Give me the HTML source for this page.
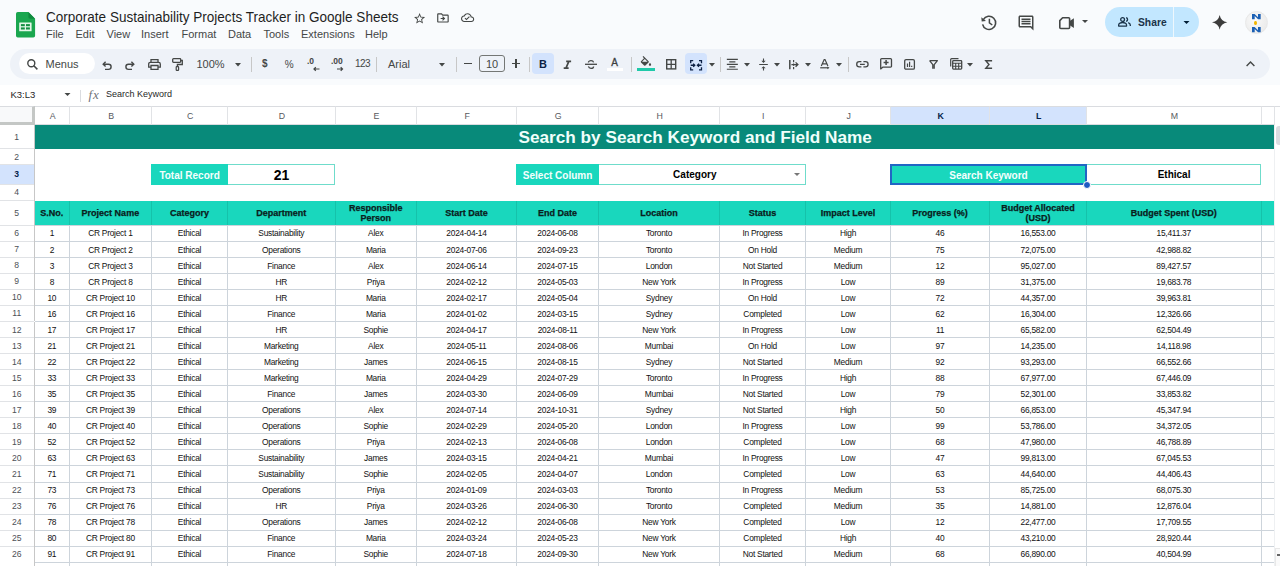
<!DOCTYPE html>
<html><head><meta charset="utf-8">
<style>
*{box-sizing:border-box}
html,body{margin:0;padding:0}
body{width:1280px;height:566px;overflow:hidden;position:relative;background:#f9fbfd;font-family:"Liberation Sans",sans-serif;color:#1f1f1f}
.abs{position:absolute}
.t{position:absolute;white-space:nowrap}
#title{left:46px;top:9px;font-size:14.2px;color:#1f1f1f;transform-origin:0 0;transform:scaleX(0.953)}
.menu{position:absolute;top:28px;font-size:11px;color:#444746}
#tb{position:absolute;left:10px;top:49px;width:1260px;height:30px;border-radius:15px;background:#eef2f8}
#search{position:absolute;left:19px;top:53px;width:76px;height:21px;border-radius:11px;background:#fff}
.tbt{position:absolute;top:58px;font-size:11px;color:#444746;white-space:nowrap}
.sep{position:absolute;top:57px;width:1px;height:15px;background:#c7c7c7}
svg{position:absolute;overflow:visible}
#fbar{position:absolute;left:0;top:85px;width:1280px;height:21px;background:#fff}
#grid{position:absolute;left:0;top:0;width:1280px;height:566px}
#gbg{position:absolute;left:0;top:106px;width:1274px;height:460px;background:#fff}
.ch{position:absolute;top:106px;height:18.5px;line-height:18.5px;text-align:center;font-size:8.8px;padding-left:1.5px;color:#575a5e;background:#fff;border-right:1px solid #e1e3e6;border-top:1px solid #dadce0;border-bottom:1px solid #dadce0}
.ch.sel{background:#d3e3fd;color:#0b57d0;font-weight:bold;color:#041e49}
.rh{position:absolute;left:0;width:34.5px;text-align:center;padding-top:0;font-size:8.6px;color:#4d5156;background:#fff;border-right:1px solid #c7c7c7}
.rhl{position:absolute;left:0;width:34px;height:1px;background:#e1e3e6}
.rh.sel{background:#d3e3fd;color:#041e49;font-weight:bold}
.hl{position:absolute;left:34.5px;width:1239.5px;height:1px;background:#cdd4db}
.vl{position:absolute;width:1px;background:#cdd4db}
.title{position:absolute;left:34.5px;width:1239.5px;background:#088a7a;color:#f0fffb;font-weight:bold;font-size:17.2px;line-height:24px;text-align:left;padding-left:484px}
.lab{position:absolute;z-index:1;background:#19d7bd;color:#f4fffd;font-weight:bold;font-size:10px;text-align:center;padding-top:1.8px}
.val{position:absolute;background:#fff;border:1px solid #6fdccb;border-left:none;color:#000;font-weight:bold;font-size:10px;text-align:center;padding-left:1.6px}
.val.big{font-size:14px}
.val.pr{padding-right:15px}
.dd{position:absolute;right:4.5px;top:8px;width:0;height:0;border-left:3px solid transparent;border-right:3px solid transparent;border-top:3px solid #777}
.selbox{position:absolute;z-index:2;border:2px solid #2166c4;box-sizing:content-box}
.handle{position:absolute;z-index:3;width:8px;height:8px;border-radius:50%;background:#1f5bc2;border:1px solid #fff;box-sizing:border-box}
.hdrbar{position:absolute;background:#19d7bd}
.hc{position:absolute;display:flex;align-items:center;justify-content:center;text-align:center;font-weight:bold;font-size:9px;line-height:10px;color:#0a201c;-webkit-text-stroke:.25px #0a201c}
.hvl{position:absolute;width:1px;background:#15c2aa}
.dc{position:absolute;text-align:center;font-size:8.4px;letter-spacing:-.25px;color:#111;white-space:nowrap;padding-top:.3px}
#vscroll{position:absolute;left:1274px;top:106px;width:6px;height:460px;background:#fff;border-left:1px solid #eef0f2}
#thumb{position:absolute;left:1275.5px;top:126px;width:4.5px;height:19px;border-radius:3px 0 0 3px;background:#dadce0}
</style></head><body>
<!-- ===== top chrome ===== -->
<svg style="left:16.1px;top:11.6px" width="19.1" height="25.5" viewBox="0 0 19.1 25.5">
  <path d="M1.8 0h10.6l6.7 6.7v17a1.8 1.8 0 0 1-1.8 1.8H1.8A1.8 1.8 0 0 1 0 23.7V1.8A1.8 1.8 0 0 1 1.8 0z" fill="#1aa64f"/>
  <path d="M12.4 0l6.7 6.7h-4.9a1.8 1.8 0 0 1-1.8-1.8z" fill="#0f8a3e"/>
  <rect x="3.2" y="10.4" width="12.4" height="8.9" rx="0.5" fill="#e3f7e8"/>
  <rect x="4.9" y="12.1" width="3.9" height="2.1" fill="#138f42"/>
  <rect x="10" y="12.1" width="3.9" height="2.1" fill="#138f42"/>
  <rect x="4.9" y="15.4" width="3.9" height="2.1" fill="#138f42"/>
  <rect x="10" y="15.4" width="3.9" height="2.1" fill="#138f42"/>
</svg>
<div class="t" id="title">Corporate Sustainability Projects Tracker in Google Sheets</div>
<!-- star -->
<svg style="left:412.6px;top:11.7px" width="13.2" height="13.2" viewBox="0 0 24 24"><path d="M22 9.24l-7.19-.62L12 2 9.19 8.63 2 9.24l5.46 4.73L5.82 21 12 17.27 18.18 21l-1.63-7.03L22 9.24zM12 15.4l-3.76 2.27 1-4.28-3.32-2.88 4.38-.38L12 6.1l1.71 4.04 4.38.38-3.32 2.88 1 4.28L12 15.4z" fill="#444746"/></svg>
<!-- folder move -->
<svg style="left:436px;top:10.5px" width="13.9" height="13.9" viewBox="0 0 24 24"><path d="M20 6h-8l-2-2H4c-1.1 0-1.99.9-1.99 2L2 18c0 1.1.9 2 2 2h16c1.1 0 2-.9 2-2V8c0-1.1-.9-2-2-2zm0 12H4V6h5.17l2 2H20v10zm-7.84-6H8v2h4.16l-1.59 1.59L11.99 17 16 13.01 11.99 9l-1.41 1.41L12.16 12z" fill="#444746"/></svg>
<!-- cloud done -->
<svg style="left:461px;top:10.9px" width="13.2" height="13.2" viewBox="0 0 24 24"><path d="M19.35 10.04C18.67 6.59 15.640 4 12 4 9.11 4 6.6 5.64 5.35 8.04 2.34 8.36 0 10.91 0 14c0 3.31 2.69 6 6 6h13c2.76 0 5-2.24 5-5 0-2.64-2.05-4.78-4.65-4.96zM19 18H6c-2.21 0-4-1.79-4-4 0-2.05 1.53-3.76 3.56-3.97l1.07-.11.5-.95C8.08 7.14 9.940 6 12 6c2.62 0 4.88 1.86 5.39 4.43l.3 1.5 1.53.11c1.56.1 2.78 1.41 2.78 2.96 0 1.65-1.35 3-3 3zm-9-3.82l-2.09-2.09L6.5 13.5 10 17l6.01-6.01-1.41-1.41z" fill="#444746"/></svg>

<div class="menu" style="left:46px">File</div>
<div class="menu" style="left:75.5px">Edit</div>
<div class="menu" style="left:106.5px">View</div>
<div class="menu" style="left:141px">Insert</div>
<div class="menu" style="left:181.5px">Format</div>
<div class="menu" style="left:228px">Data</div>
<div class="menu" style="left:263.5px">Tools</div>
<div class="menu" style="left:301px">Extensions</div>
<div class="menu" style="left:365px">Help</div>

<!-- right side of header -->
<!-- history -->
<svg style="left:981px;top:15px" width="15.5" height="15" viewBox="0 0 15.5 15"><path d="M2.3 4.6A6.6 6.6 0 1 1 1.6 9.3" fill="none" stroke="#444746" stroke-width="1.6"/><path d="M.3 2.2l.4 4.4 4.3-.7z" fill="#444746"/><path d="M8.4 3.8v4.1l2.9 2.1" fill="none" stroke="#444746" stroke-width="1.5"/></svg>
<!-- comment -->
<svg style="left:1017px;top:14px" width="18" height="18" viewBox="0 0 24 24"><path d="M21.99 4c0-1.1-.89-2-1.99-2H4c-1.1 0-2 .9-2 2v12c0 1.1.9 2 2 2h14l4 4zM20 4v13.17L18.83 16H4V4zM6 12h12v2H6zm0-3h12v2H6zm0-3h12v2H6z" fill="#444746"/></svg>
<!-- video -->
<svg style="left:1058.9px;top:16.7px" width="15.3" height="12.3" viewBox="0 0 15.3 12.3"><path d="M3.6.8h6a1 1 0 0 1 1 1v8.7a1 1 0 0 1-1 1H1.8a1 1 0 0 1-1-1V3.6z" fill="none" stroke="#444746" stroke-width="1.6" stroke-linejoin="round"/><path d="M10.4 4.3l4.5-3v9.7l-4.5-3z" fill="#444746"/></svg>
<svg style="left:1082px;top:20px" width="6" height="4" viewBox="0 0 6 4"><path d="M0 0h6L3 3z" fill="#444746"/></svg>
<!-- share -->
<div class="abs" style="left:1105px;top:7.2px;width:93.5px;height:29.6px;border-radius:15px;background:#c2e7ff"></div>
<div class="abs" style="left:1172.5px;top:7.2px;width:1px;height:29.6px;background:#f9fbfd;opacity:.8"></div>
<svg style="left:1118px;top:17.2px" width="13" height="9.8" viewBox="0 0 13 9.8"><circle cx="4.6" cy="2.5" r="1.9" fill="none" stroke="#1b3349" stroke-width="1.3"/><path d="M.65 9.1V7.9c0-1.5 2.3-2.4 3.95-2.4s3.95.9 3.95 2.4v1.2z" fill="none" stroke="#1b3349" stroke-width="1.3" stroke-linejoin="round"/><path d="M8.1.7a1.9 1.9 0 0 1 0 3.7" fill="none" stroke="#1b3349" stroke-width="1.3"/><path d="M10.2 5.7c1.2.4 2.1 1.1 2.1 2.2v1.2" fill="none" stroke="#1b3349" stroke-width="1.3"/></svg>
<div class="t" style="left:1137.5px;top:15.5px;font-size:11.2px;font-weight:bold;color:#1b3349;transform-origin:0 0;transform:scaleX(.92)">Share</div>
<svg style="left:1183px;top:21px" width="7" height="4" viewBox="0 0 6 4"><path d="M0 0h6L3 3z" fill="#001d35"/></svg>
<!-- gemini -->
<svg style="left:1212px;top:15px" width="15.3" height="14.7" viewBox="0 0 24 24" preserveAspectRatio="none"><path d="M12 0A15 15 0 0 0 24 12 15 15 0 0 0 12 24 15 15 0 0 0 0 12 15 15 0 0 0 12 0z" fill="#3c3c3c"/></svg>
<!-- avatar -->
<div class="abs" style="left:1244.9px;top:11.2px;width:23.2px;height:23.2px;border-radius:50%;background:radial-gradient(circle at 40% 40%,#fafafa,#e6e6e6);border:1px solid #e8e8e8"></div>
<svg style="left:1251.6px;top:13.5px" width="8.7" height="5.2" viewBox="0 0 8.7 5.2"><path d="M0 0h2.6l3.4 3.2V0h2.7v5.2H6.1L2.7 2v3.2H0z" fill="#1a5fb4"/></svg>
<div class="abs" style="left:1254.3px;top:20.8px;width:2.6px;height:4px;border-radius:50%;background:#f2b600"></div>
<svg style="left:1251.6px;top:27.2px" width="8.7" height="5.3" viewBox="0 0 8.7 5.2"><path d="M0 0h2.6l3.4 3.2V0h2.7v5.2H6.1L2.7 2v3.2H0z" fill="#1a5fb4"/></svg>

<!-- toolbar -->
<div id="tb"></div>
<div id="search"></div>
<svg style="left:26.5px;top:58.8px" width="11" height="11" viewBox="0 0 11 11"><circle cx="4.3" cy="4.3" r="3.5" fill="none" stroke="#444746" stroke-width="1.4"/><path d="M6.8 6.8L10.4 10.4" stroke="#444746" stroke-width="1.5"/></svg>
<div class="tbt" style="left:45.5px;top:57.5px">Menus</div>
<svg style="left:102px;top:60.5px" width="10" height="9" viewBox="0 0 10 9"><path d="M1.5 3.2h5a2.6 2.6 0 0 1 0 5.2H3" fill="none" stroke="#444746" stroke-width="1.4"/><path d="M3.6 .8L1.2 3.2 3.6 5.6" fill="none" stroke="#444746" stroke-width="1.4"/></svg>
<svg style="left:125.3px;top:60.7px" width="10" height="9" viewBox="0 0 10 9"><path d="M8.5 3.2h-5a2.6 2.6 0 0 0 0 5.2H7" fill="none" stroke="#444746" stroke-width="1.4"/><path d="M6.4 .8l2.4 2.4-2.4 2.4" fill="none" stroke="#444746" stroke-width="1.4"/></svg>
<svg style="left:148px;top:59px" width="13" height="11" viewBox="0 0 13 11"><path d="M3 3.3V.7h7v2.6" fill="none" stroke="#444746" stroke-width="1.3"/><path d="M3 8.2H.7V5a1.7 1.7 0 0 1 1.7-1.7h8.2A1.7 1.7 0 0 1 12.3 5v3.2H10" fill="none" stroke="#444746" stroke-width="1.3"/><path d="M3 6.5h7v3.8H3z" fill="none" stroke="#444746" stroke-width="1.3"/></svg>
<svg style="left:171.8px;top:57.8px" width="11" height="13" viewBox="0 0 11 13"><rect x=".7" y=".7" width="8" height="3.6" rx=".8" fill="none" stroke="#444746" stroke-width="1.3"/><path d="M8.7 2.5h1.6v4H5.4v2.3" fill="none" stroke="#444746" stroke-width="1.3"/><rect x="4.2" y="8.6" width="2.4" height="3.8" rx=".6" fill="none" stroke="#444746" stroke-width="1.2"/></svg>
<div class="tbt" style="left:196.5px">100%</div>
<svg style="left:234.8px;top:62.5px" width="6" height="3.5" viewBox="0 0 6 3.5"><path d="M0 0h6L3 3.5z" fill="#444746"/></svg>
<div class="sep" style="left:250.5px"></div>
<div class="tbt" style="left:262px;font-weight:bold;font-size:10px;top:58px">$</div>
<div class="tbt" style="left:284.8px;font-size:10px;top:58.5px">%</div>
<div class="tbt" style="left:307px;font-size:8.5px;top:56.3px;font-weight:bold;letter-spacing:-.2px">.0</div>
<svg style="left:313px;top:66.5px" width="6.5" height="4" viewBox="0 0 6.5 4"><path d="M6.5 2H1.2M2.8 .3L1 2l1.8 1.7" fill="none" stroke="#444746" stroke-width="1.2"/></svg>
<div class="tbt" style="left:331px;font-size:8.5px;top:56.3px;font-weight:bold;letter-spacing:0px">.00</div>
<svg style="left:336.5px;top:66.7px" width="6.5" height="4" viewBox="0 0 6.5 4"><path d="M0 2h5.3M3.7 .3L5.5 2 3.7 3.7" fill="none" stroke="#444746" stroke-width="1.2"/></svg>
<div class="tbt" style="left:355px;font-size:10px;top:58px;letter-spacing:-.6px">123</div>
<div class="sep" style="left:376px"></div>
<div class="tbt" style="left:388px;top:57.5px">Arial</div>
<svg style="left:439px;top:62.5px" width="6" height="3.5" viewBox="0 0 6 3.5"><path d="M0 0h6L3 3.5z" fill="#444746"/></svg>
<div class="sep" style="left:455.5px"></div>
<div class="abs" style="left:464px;top:63.2px;width:8px;height:1.3px;background:#444746"></div>
<div class="abs" style="left:479.3px;top:54.9px;width:25.4px;height:17.5px;border:1px solid #747775;border-radius:3px"></div>
<div class="tbt" style="left:486px;top:58px">10</div>
<div class="abs" style="left:511.8px;top:63.2px;width:8.4px;height:1.3px;background:#444746"></div>
<div class="abs" style="left:515.35px;top:59.2px;width:1.3px;height:9.3px;background:#444746"></div>
<div class="sep" style="left:528.5px"></div>
<div class="abs" style="left:532px;top:53.3px;width:21.7px;height:20.6px;border-radius:4px;background:#d3e3fd"></div>
<div class="tbt" style="left:539px;top:57.8px;font-weight:bold;font-size:11px;color:#0b1f44">B</div>
<svg style="left:559.8px;top:57.5px" width="14.8" height="14.8" viewBox="0 0 24 24"><path d="M10 4v3h2.21l-3.42 8H6v3h8v-3h-2.21l3.42-8H18V4z" fill="#444746"/></svg>
<svg style="left:585px;top:60px" width="12" height="9" viewBox="0 0 12 9"><path d="M0 4.3h12" stroke="#444746" stroke-width="1.3"/><path d="M8.6 2.3C8.3 1.2 7.2.7 6 .7 4.6.7 3.4 1.4 3.4 2.5M3.4 6.4C3.7 7.6 4.8 8.3 6 8.3c1.4 0 2.6-.6 2.6-1.9" fill="none" stroke="#444746" stroke-width="1.3"/></svg>
<div class="tbt" style="left:611.3px;top:57px;font-size:10px;color:#3c3f41;-webkit-text-stroke:.3px #3c3f41">A</div>
<div class="abs" style="left:607px;top:68px;width:16.4px;height:2.8px;background:#fff"></div>
<div class="sep" style="left:631px"></div>
<svg style="left:638.9px;top:55.8px" width="13.9" height="13.9" viewBox="0 0 24 24"><path d="M16.56 8.94L7.62 0 6.21 1.41l2.38 2.38-5.15 5.15c-.59.59-.59 1.54 0 2.12l5.5 5.5c.29.29.68.44 1.06.44s.77-.15 1.06-.44l5.5-5.5c.59-.58.59-1.53 0-2.12zM5.21 10L10 5.21 14.79 10H5.21zM19 11.5s-2 2.17-2 3.5c0 1.1.9 2 2 2s2-.9 2-2c0-1.33-2-3.5-2-3.5z" fill="#444746"/></svg>
<div class="abs" style="left:637.2px;top:67.9px;width:17.8px;height:2.7px;background:#1fc9a9"></div>
<svg style="left:665.7px;top:59.3px" width="10.4" height="10.6" viewBox="0 0 10.4 10.6"><rect x=".7" y=".7" width="9" height="9.2" fill="none" stroke="#444746" stroke-width="1.4"/><path d="M5.2 .7v9.2M.7 5.3h9" stroke="#444746" stroke-width="1.3"/></svg>
<div class="abs" style="left:685.3px;top:53.1px;width:21.3px;height:21.3px;border-radius:4px;background:#d3e3fd"></div>
<svg style="left:690px;top:59.5px" width="12.2" height="10.5" viewBox="0 0 12.2 10.5"><path d="M3.2 .7H.7v2.6M.7 7.2v2.6h2.5M9 .7h2.5v2.6M11.5 7.2v2.6H9" fill="none" stroke="#0b1f44" stroke-width="1.3"/><path d="M.7 5.25h4M3.2 3.6l1.6 1.65-1.6 1.65M11.5 5.25h-4M9 3.6L7.4 5.25 9 6.9" fill="none" stroke="#0b1f44" stroke-width="1.3"/></svg>
<svg style="left:709px;top:63px" width="6" height="3.5" viewBox="0 0 6 3.5"><path d="M0 0h6L3 3.5z" fill="#444746"/></svg>
<div class="sep" style="left:720px"></div>
<svg style="left:725.3px;top:57.1px" width="14.7" height="14.7" viewBox="0 0 24 24"><path d="M7 15v2h10v-2H7zm-4 6h18v-2H3v2zm0-8h18v-2H3v2zm4-6v2h10V7H7zM3 3v2h18V3H3z" fill="#444746"/></svg>
<svg style="left:743.9px;top:62.7px" width="6" height="3.5" viewBox="0 0 6 3.5"><path d="M0 0h6L3 3.5z" fill="#444746"/></svg>
<svg style="left:756.9px;top:58.05px" width="13" height="13" viewBox="0 0 24 24"><path d="M8 19h3v4h2v-4h3l-4-4-4 4zm8-14h-3V1h-2v4H8l4 4 4-4zM4 11v2h16v-2H4z" fill="#444746"/></svg>
<svg style="left:773.8px;top:62.7px" width="6" height="3.5" viewBox="0 0 6 3.5"><path d="M0 0h6L3 3.5z" fill="#444746"/></svg>
<svg style="left:789px;top:60px" width="9.6" height="9.2" viewBox="0 0 9.6 9.2"><path d="M.8 0v9.2" stroke="#444746" stroke-width="1.5"/><path d="M4.6 0v2.2M4.6 3.5v2.2M4.6 7v2.2" stroke="#444746" stroke-width="1.2"/><path d="M2.4 4.6h6.4M6.6 2.4l2.3 2.2-2.3 2.2" fill="none" stroke="#444746" stroke-width="1.3"/></svg>
<svg style="left:804.8px;top:62.7px" width="6" height="3.5" viewBox="0 0 6 3.5"><path d="M0 0h6L3 3.5z" fill="#444746"/></svg>
<svg style="left:820px;top:59.3px" width="10" height="10.2" viewBox="0 0 10 10.2"><path d="M1.3 7L4.2 .6h.8L7.9 7M2.5 4.8h4.2" fill="none" stroke="#444746" stroke-width="1.2"/><path d="M.2 8.8h8" stroke="#444746" stroke-width="1.2"/><path d="M7.4 7.4l2.1 1.4-2.1 1.4z" fill="#444746"/></svg>
<svg style="left:835.8px;top:62.7px" width="6" height="3.5" viewBox="0 0 6 3.5"><path d="M0 0h6L3 3.5z" fill="#444746"/></svg>
<div class="sep" style="left:847.5px"></div>
<svg style="left:855.6px;top:61.2px" width="12.8" height="6.6" viewBox="0 0 12.8 6.6"><path d="M5.4.7H3.3a2.6 2.6 0 0 0 0 5.2h2.1M7.4.7h2.1a2.6 2.6 0 0 1 0 5.2H7.4M4 3.3h4.8" fill="none" stroke="#444746" stroke-width="1.3"/></svg>
<svg style="left:879.9px;top:58.2px" width="12.2" height="11.6" viewBox="0 0 12.2 11.6"><path d="M1.6.7h9a.9.9 0 0 1 .9.9v6.6a.9.9 0 0 1-.9.9H3L.7 10.9V1.6a.9.9 0 0 1 .9-.9z" fill="none" stroke="#444746" stroke-width="1.3" stroke-linejoin="round"/><path d="M6.1 2.1v5M3.6 4.6h5" stroke="#444746" stroke-width="1.5"/></svg>
<svg style="left:903.9px;top:58.8px" width="11.1" height="10.9" viewBox="0 0 11.1 10.9"><rect x=".7" y=".7" width="9.7" height="9.5" rx="1.3" fill="none" stroke="#444746" stroke-width="1.3"/><path d="M3.5 8V4.5M5.6 8V2.8M7.7 8V6.8" stroke="#444746" stroke-width="1.2"/></svg>
<svg style="left:929px;top:60px" width="9" height="8.8" viewBox="0 0 9 8.8"><path d="M.6.7h7.8L5.2 4.6v4.2M3.8 8.8V4.6L.6.7" fill="none" stroke="#444746" stroke-width="1.3" stroke-linejoin="round"/></svg>
<svg style="left:949.6px;top:58.2px" width="12.4" height="11.8" viewBox="0 0 12.4 11.8"><path d="M.7 8.5V1.5a.8.8 0 0 1 .8-.8h7" fill="none" stroke="#444746" stroke-width="1.2"/><rect x="2.7" y="2.7" width="9" height="8.4" rx=".8" fill="none" stroke="#444746" stroke-width="1.3"/><path d="M2.7 5.3h9M2.7 8.2h9M5.7 5.3v5.8M8.7 5.3v5.8" stroke="#444746" stroke-width="1.1"/></svg>
<svg style="left:967.2px;top:62.5px" width="6" height="3.5" viewBox="0 0 6 3.5"><path d="M0 0h6L3 3.5z" fill="#444746"/></svg>
<svg style="left:984.8px;top:60px" width="7.3" height="9" viewBox="0 0 7.3 9"><path d="M7.1.7H.8l3.2 3.8L.8 8.3h6.3" fill="none" stroke="#444746" stroke-width="1.4"/></svg>
<svg style="left:1245.7px;top:60.5px" width="9" height="5.5" viewBox="0 0 9 5.5"><path d="M.6 4.9L4.5 1 8.4 4.9" fill="none" stroke="#444746" stroke-width="1.4"/></svg>

<!-- formula bar -->
<div id="fbar"></div>
<div class="t" style="left:10.5px;top:89px;font-size:9.5px;color:#1f1f1f">K3:L3</div>
<svg style="left:64px;top:93px" width="7" height="4" viewBox="0 0 6 4"><path d="M0 0h6L3 3z" fill="#444746"/></svg>
<div class="abs" style="left:79.5px;top:90px;width:1px;height:12px;background:#dadce0"></div>
<div class="t" style="left:88.5px;top:86.5px;font-size:13px;font-style:italic;font-family:'Liberation Serif',serif;color:#6f7378;letter-spacing:1px">fx</div>
<div class="t" style="left:106px;top:89px;font-size:9px;color:#1f1f1f">Search Keyword</div>
<div id="gbg"></div>
<div id="vscroll"></div>
<div id="thumb"></div>
<div class="abs" style="left:1275px;top:548px;width:5px;height:18px;background:#fafafa;border-left:1px solid #e8e8e8;border-top:1px solid #e8e8e8"></div>
<div class="abs" style="left:1277px;top:554px;width:3px;height:1.5px;background:#666"></div>
<div class="abs" style="left:0;top:106px;width:1280px;height:1px;background:#dadce0"></div>
<div class="abs" style="left:0;top:106px;width:34.5px;height:18.5px;background:#f8f9fa;border-top:1px solid #dadce0;border-bottom:3px solid #c4c7c5;border-right:3px solid #c4c7c5"></div>

<div id="grid">
<div class="ch" style="left:35.0px;width:34.75px">A</div>
<div class="ch" style="left:69.75px;width:82.25px">B</div>
<div class="ch" style="left:152.0px;width:76.0px">C</div>
<div class="ch" style="left:228.0px;width:107.5px">D</div>
<div class="ch" style="left:335.5px;width:81.5px">E</div>
<div class="ch" style="left:417.0px;width:100.0px">F</div>
<div class="ch" style="left:517.0px;width:82.0px">G</div>
<div class="ch" style="left:599.0px;width:121.0px">H</div>
<div class="ch" style="left:720.0px;width:86.0px">I</div>
<div class="ch" style="left:806.0px;width:85.0px">J</div>
<div class="ch sel" style="left:891.0px;width:99.0px">K</div>
<div class="ch sel" style="left:990.0px;width:97.0px">L</div>
<div class="ch" style="left:1087.0px;width:174.5px">M</div>
<div class="ch" style="left:1261.5px;width:13px"></div>
<div class="rh" style="top:124.5px;height:24.0px;line-height:24.0px">1</div>
<div class="rh" style="top:148.5px;height:16.099999999999994px;line-height:16.099999999999994px">2</div>
<div class="rh sel" style="top:164.6px;height:19.700000000000017px;line-height:19.700000000000017px">3</div>
<div class="rh" style="top:184.3px;height:16.299999999999983px;line-height:16.299999999999983px">4</div>
<div class="rh" style="top:200.6px;height:24.599999999999994px;line-height:24.599999999999994px">5</div>
<div class="rh" style="top:225.2px;height:16.05000000000001px;line-height:16.05000000000001px">6</div>
<div class="rh" style="top:241.25px;height:16.05000000000001px;line-height:16.05000000000001px">7</div>
<div class="rh" style="top:257.3px;height:16.05000000000001px;line-height:16.05000000000001px">8</div>
<div class="rh" style="top:273.35px;height:16.049999999999955px;line-height:16.049999999999955px">9</div>
<div class="rh" style="top:289.4px;height:16.05000000000001px;line-height:16.05000000000001px">10</div>
<div class="rh" style="top:305.45px;height:16.05000000000001px;line-height:16.05000000000001px">11</div>
<div class="rh" style="top:321.5px;height:16.05000000000001px;line-height:16.05000000000001px">12</div>
<div class="rh" style="top:337.55px;height:16.05000000000001px;line-height:16.05000000000001px">13</div>
<div class="rh" style="top:353.6px;height:16.049999999999955px;line-height:16.049999999999955px">14</div>
<div class="rh" style="top:369.65px;height:16.05000000000001px;line-height:16.05000000000001px">15</div>
<div class="rh" style="top:385.7px;height:16.05000000000001px;line-height:16.05000000000001px">16</div>
<div class="rh" style="top:401.75px;height:16.05000000000001px;line-height:16.05000000000001px">17</div>
<div class="rh" style="top:417.8px;height:16.05000000000001px;line-height:16.05000000000001px">18</div>
<div class="rh" style="top:433.85px;height:16.049999999999955px;line-height:16.049999999999955px">19</div>
<div class="rh" style="top:449.9px;height:16.05000000000001px;line-height:16.05000000000001px">20</div>
<div class="rh" style="top:465.95px;height:16.05000000000001px;line-height:16.05000000000001px">21</div>
<div class="rh" style="top:482.0px;height:16.05000000000001px;line-height:16.05000000000001px">22</div>
<div class="rh" style="top:498.05px;height:16.05000000000001px;line-height:16.05000000000001px">23</div>
<div class="rh" style="top:514.1px;height:16.049999999999955px;line-height:16.049999999999955px">24</div>
<div class="rh" style="top:530.15px;height:16.050000000000068px;line-height:16.050000000000068px">25</div>
<div class="rh" style="top:546.2px;height:16.049999999999955px;line-height:16.049999999999955px">26</div>
<div class="rhl" style="top:148px"></div>
<div class="rhl" style="top:164px"></div>
<div class="rhl" style="top:184px"></div>
<div class="rhl" style="top:200px"></div>
<div class="rhl" style="top:225px"></div>
<div class="rhl" style="top:241px"></div>
<div class="rhl" style="top:257px"></div>
<div class="rhl" style="top:273px"></div>
<div class="rhl" style="top:289px"></div>
<div class="rhl" style="top:305px"></div>
<div class="rhl" style="top:321px"></div>
<div class="rhl" style="top:337px"></div>
<div class="rhl" style="top:353px"></div>
<div class="rhl" style="top:369px"></div>
<div class="rhl" style="top:385px"></div>
<div class="rhl" style="top:401px"></div>
<div class="rhl" style="top:417px"></div>
<div class="rhl" style="top:433px"></div>
<div class="rhl" style="top:449px"></div>
<div class="rhl" style="top:465px"></div>
<div class="rhl" style="top:482px"></div>
<div class="rhl" style="top:498px"></div>
<div class="rhl" style="top:514px"></div>
<div class="rhl" style="top:530px"></div>
<div class="rhl" style="top:546px"></div>
<div class="rhl" style="top:562px"></div>
<div class="rh" style="top:562.25px;height:20px"></div>
<div class="hl" style="top:225px"></div>
<div class="hl" style="top:241px"></div>
<div class="hl" style="top:257px"></div>
<div class="hl" style="top:273px"></div>
<div class="hl" style="top:289px"></div>
<div class="hl" style="top:305px"></div>
<div class="hl" style="top:321px"></div>
<div class="hl" style="top:337px"></div>
<div class="hl" style="top:353px"></div>
<div class="hl" style="top:369px"></div>
<div class="hl" style="top:385px"></div>
<div class="hl" style="top:401px"></div>
<div class="hl" style="top:417px"></div>
<div class="hl" style="top:433px"></div>
<div class="hl" style="top:449px"></div>
<div class="hl" style="top:465px"></div>
<div class="hl" style="top:482px"></div>
<div class="hl" style="top:498px"></div>
<div class="hl" style="top:514px"></div>
<div class="hl" style="top:530px"></div>
<div class="hl" style="top:546px"></div>
<div class="hl" style="top:562px"></div>
<div class="vl" style="left:68.75px;top:200.6px;height:365.4px"></div>
<div class="vl" style="left:151.0px;top:200.6px;height:365.4px"></div>
<div class="vl" style="left:227.0px;top:200.6px;height:365.4px"></div>
<div class="vl" style="left:334.5px;top:200.6px;height:365.4px"></div>
<div class="vl" style="left:416.0px;top:200.6px;height:365.4px"></div>
<div class="vl" style="left:516.0px;top:200.6px;height:365.4px"></div>
<div class="vl" style="left:598.0px;top:200.6px;height:365.4px"></div>
<div class="vl" style="left:719.0px;top:200.6px;height:365.4px"></div>
<div class="vl" style="left:805.0px;top:200.6px;height:365.4px"></div>
<div class="vl" style="left:890.0px;top:200.6px;height:365.4px"></div>
<div class="vl" style="left:989.0px;top:200.6px;height:365.4px"></div>
<div class="vl" style="left:1086.0px;top:200.6px;height:365.4px"></div>
<div class="vl" style="left:1260.5px;top:200.6px;height:365.4px"></div>
<div class="title" style="top:124.5px;height:24.0px">Search by Search Keyword and Field Name</div>
<div class="lab" style="left:150.9px;top:164.2px;width:77.4px;height:20.6px;line-height:20.6px">Total Record</div>
<div class="val big" style="left:227.5px;top:164.2px;width:107.5px;height:20.6px;line-height:20.6px">21</div>
<div class="lab" style="left:515.9px;top:164.2px;width:83.39999999999998px;height:20.6px;line-height:20.6px">Select Column</div>
<div class="val pr" style="left:598.5px;top:164.2px;width:207.0px;height:20.6px;line-height:20.6px">Category<span class="dd"></span></div>
<div class="lab" style="left:890.5px;top:164.2px;width:196.0px;height:20.6px;line-height:20.6px">Search Keyword</div>
<div class="val" style="left:1086.5px;top:164.2px;width:174.5px;height:20.6px;line-height:20.6px">Ethical</div>
<div class="selbox" style="left:890.0px;top:164px;width:193.0px;height:17px"></div>
<div class="handle" style="left:1082.5px;top:180.6px"></div>
<div class="hdrbar" style="top:200.6px;height:24.599999999999994px;left:34.5px;width:1239.5px"></div>
<div class="hc" style="left:34.5px;top:200.6px;width:34.75px;height:24.599999999999994px"><span>S.No.</span></div>
<div class="hc" style="left:69.25px;top:200.6px;width:82.25px;height:24.599999999999994px"><span>Project Name</span></div>
<div class="hc" style="left:151.5px;top:200.6px;width:76.0px;height:24.599999999999994px"><span>Category</span></div>
<div class="hc" style="left:227.5px;top:200.6px;width:107.5px;height:24.599999999999994px"><span>Department</span></div>
<div class="hc" style="left:335px;top:200.6px;width:81.5px;height:24.599999999999994px"><span>Responsible<br>Person</span></div>
<div class="hc" style="left:416.5px;top:200.6px;width:100.0px;height:24.599999999999994px"><span>Start Date</span></div>
<div class="hc" style="left:516.5px;top:200.6px;width:82.0px;height:24.599999999999994px"><span>End Date</span></div>
<div class="hc" style="left:598.5px;top:200.6px;width:121.0px;height:24.599999999999994px"><span>Location</span></div>
<div class="hc" style="left:719.5px;top:200.6px;width:86.0px;height:24.599999999999994px"><span>Status</span></div>
<div class="hc" style="left:805.5px;top:200.6px;width:85.0px;height:24.599999999999994px"><span>Impact Level</span></div>
<div class="hc" style="left:890.5px;top:200.6px;width:99.0px;height:24.599999999999994px"><span>Progress (%)</span></div>
<div class="hc" style="left:989.5px;top:200.6px;width:97.0px;height:24.599999999999994px"><span>Budget Allocated<br>(USD)</span></div>
<div class="hc" style="left:1086.5px;top:200.6px;width:174.5px;height:24.599999999999994px"><span>Budget Spent (USD)</span></div>
<div class="hvl" style="left:68.75px;top:200.6px;height:24.599999999999994px"></div>
<div class="hvl" style="left:151.0px;top:200.6px;height:24.599999999999994px"></div>
<div class="hvl" style="left:227.0px;top:200.6px;height:24.599999999999994px"></div>
<div class="hvl" style="left:334.5px;top:200.6px;height:24.599999999999994px"></div>
<div class="hvl" style="left:416.0px;top:200.6px;height:24.599999999999994px"></div>
<div class="hvl" style="left:516.0px;top:200.6px;height:24.599999999999994px"></div>
<div class="hvl" style="left:598.0px;top:200.6px;height:24.599999999999994px"></div>
<div class="hvl" style="left:719.0px;top:200.6px;height:24.599999999999994px"></div>
<div class="hvl" style="left:805.0px;top:200.6px;height:24.599999999999994px"></div>
<div class="hvl" style="left:890.0px;top:200.6px;height:24.599999999999994px"></div>
<div class="hvl" style="left:989.0px;top:200.6px;height:24.599999999999994px"></div>
<div class="hvl" style="left:1086.0px;top:200.6px;height:24.599999999999994px"></div>
<div class="hvl" style="left:1260.5px;top:200.6px;height:24.599999999999994px"></div>
<div class="dc" style="left:34.5px;top:225.2px;width:34.75px;height:16.05000000000001px;line-height:16.05000000000001px">1</div>
<div class="dc" style="left:69.25px;top:225.2px;width:82.25px;height:16.05000000000001px;line-height:16.05000000000001px">CR Project 1</div>
<div class="dc" style="left:151.5px;top:225.2px;width:76.0px;height:16.05000000000001px;line-height:16.05000000000001px">Ethical</div>
<div class="dc" style="left:227.5px;top:225.2px;width:107.5px;height:16.05000000000001px;line-height:16.05000000000001px">Sustainability</div>
<div class="dc" style="left:335px;top:225.2px;width:81.5px;height:16.05000000000001px;line-height:16.05000000000001px">Alex</div>
<div class="dc" style="left:416.5px;top:225.2px;width:100.0px;height:16.05000000000001px;line-height:16.05000000000001px">2024-04-14</div>
<div class="dc" style="left:516.5px;top:225.2px;width:82.0px;height:16.05000000000001px;line-height:16.05000000000001px">2024-06-08</div>
<div class="dc" style="left:598.5px;top:225.2px;width:121.0px;height:16.05000000000001px;line-height:16.05000000000001px">Toronto</div>
<div class="dc" style="left:719.5px;top:225.2px;width:86.0px;height:16.05000000000001px;line-height:16.05000000000001px">In Progress</div>
<div class="dc" style="left:805.5px;top:225.2px;width:85.0px;height:16.05000000000001px;line-height:16.05000000000001px">High</div>
<div class="dc" style="left:890.5px;top:225.2px;width:99.0px;height:16.05000000000001px;line-height:16.05000000000001px">46</div>
<div class="dc" style="left:989.5px;top:225.2px;width:97.0px;height:16.05000000000001px;line-height:16.05000000000001px">16,553.00</div>
<div class="dc" style="left:1086.5px;top:225.2px;width:174.5px;height:16.05000000000001px;line-height:16.05000000000001px">15,411.37</div>
<div class="dc" style="left:34.5px;top:241.25px;width:34.75px;height:16.05000000000001px;line-height:16.05000000000001px">2</div>
<div class="dc" style="left:69.25px;top:241.25px;width:82.25px;height:16.05000000000001px;line-height:16.05000000000001px">CR Project 2</div>
<div class="dc" style="left:151.5px;top:241.25px;width:76.0px;height:16.05000000000001px;line-height:16.05000000000001px">Ethical</div>
<div class="dc" style="left:227.5px;top:241.25px;width:107.5px;height:16.05000000000001px;line-height:16.05000000000001px">Operations</div>
<div class="dc" style="left:335px;top:241.25px;width:81.5px;height:16.05000000000001px;line-height:16.05000000000001px">Maria</div>
<div class="dc" style="left:416.5px;top:241.25px;width:100.0px;height:16.05000000000001px;line-height:16.05000000000001px">2024-07-06</div>
<div class="dc" style="left:516.5px;top:241.25px;width:82.0px;height:16.05000000000001px;line-height:16.05000000000001px">2024-09-23</div>
<div class="dc" style="left:598.5px;top:241.25px;width:121.0px;height:16.05000000000001px;line-height:16.05000000000001px">Toronto</div>
<div class="dc" style="left:719.5px;top:241.25px;width:86.0px;height:16.05000000000001px;line-height:16.05000000000001px">On Hold</div>
<div class="dc" style="left:805.5px;top:241.25px;width:85.0px;height:16.05000000000001px;line-height:16.05000000000001px">Medium</div>
<div class="dc" style="left:890.5px;top:241.25px;width:99.0px;height:16.05000000000001px;line-height:16.05000000000001px">75</div>
<div class="dc" style="left:989.5px;top:241.25px;width:97.0px;height:16.05000000000001px;line-height:16.05000000000001px">72,075.00</div>
<div class="dc" style="left:1086.5px;top:241.25px;width:174.5px;height:16.05000000000001px;line-height:16.05000000000001px">42,988.82</div>
<div class="dc" style="left:34.5px;top:257.3px;width:34.75px;height:16.05000000000001px;line-height:16.05000000000001px">3</div>
<div class="dc" style="left:69.25px;top:257.3px;width:82.25px;height:16.05000000000001px;line-height:16.05000000000001px">CR Project 3</div>
<div class="dc" style="left:151.5px;top:257.3px;width:76.0px;height:16.05000000000001px;line-height:16.05000000000001px">Ethical</div>
<div class="dc" style="left:227.5px;top:257.3px;width:107.5px;height:16.05000000000001px;line-height:16.05000000000001px">Finance</div>
<div class="dc" style="left:335px;top:257.3px;width:81.5px;height:16.05000000000001px;line-height:16.05000000000001px">Alex</div>
<div class="dc" style="left:416.5px;top:257.3px;width:100.0px;height:16.05000000000001px;line-height:16.05000000000001px">2024-06-14</div>
<div class="dc" style="left:516.5px;top:257.3px;width:82.0px;height:16.05000000000001px;line-height:16.05000000000001px">2024-07-15</div>
<div class="dc" style="left:598.5px;top:257.3px;width:121.0px;height:16.05000000000001px;line-height:16.05000000000001px">London</div>
<div class="dc" style="left:719.5px;top:257.3px;width:86.0px;height:16.05000000000001px;line-height:16.05000000000001px">Not Started</div>
<div class="dc" style="left:805.5px;top:257.3px;width:85.0px;height:16.05000000000001px;line-height:16.05000000000001px">Medium</div>
<div class="dc" style="left:890.5px;top:257.3px;width:99.0px;height:16.05000000000001px;line-height:16.05000000000001px">12</div>
<div class="dc" style="left:989.5px;top:257.3px;width:97.0px;height:16.05000000000001px;line-height:16.05000000000001px">95,027.00</div>
<div class="dc" style="left:1086.5px;top:257.3px;width:174.5px;height:16.05000000000001px;line-height:16.05000000000001px">89,427.57</div>
<div class="dc" style="left:34.5px;top:273.35px;width:34.75px;height:16.049999999999955px;line-height:16.049999999999955px">8</div>
<div class="dc" style="left:69.25px;top:273.35px;width:82.25px;height:16.049999999999955px;line-height:16.049999999999955px">CR Project 8</div>
<div class="dc" style="left:151.5px;top:273.35px;width:76.0px;height:16.049999999999955px;line-height:16.049999999999955px">Ethical</div>
<div class="dc" style="left:227.5px;top:273.35px;width:107.5px;height:16.049999999999955px;line-height:16.049999999999955px">HR</div>
<div class="dc" style="left:335px;top:273.35px;width:81.5px;height:16.049999999999955px;line-height:16.049999999999955px">Priya</div>
<div class="dc" style="left:416.5px;top:273.35px;width:100.0px;height:16.049999999999955px;line-height:16.049999999999955px">2024-02-12</div>
<div class="dc" style="left:516.5px;top:273.35px;width:82.0px;height:16.049999999999955px;line-height:16.049999999999955px">2024-05-03</div>
<div class="dc" style="left:598.5px;top:273.35px;width:121.0px;height:16.049999999999955px;line-height:16.049999999999955px">New York</div>
<div class="dc" style="left:719.5px;top:273.35px;width:86.0px;height:16.049999999999955px;line-height:16.049999999999955px">In Progress</div>
<div class="dc" style="left:805.5px;top:273.35px;width:85.0px;height:16.049999999999955px;line-height:16.049999999999955px">Low</div>
<div class="dc" style="left:890.5px;top:273.35px;width:99.0px;height:16.049999999999955px;line-height:16.049999999999955px">89</div>
<div class="dc" style="left:989.5px;top:273.35px;width:97.0px;height:16.049999999999955px;line-height:16.049999999999955px">31,375.00</div>
<div class="dc" style="left:1086.5px;top:273.35px;width:174.5px;height:16.049999999999955px;line-height:16.049999999999955px">19,683.78</div>
<div class="dc" style="left:34.5px;top:289.4px;width:34.75px;height:16.05000000000001px;line-height:16.05000000000001px">10</div>
<div class="dc" style="left:69.25px;top:289.4px;width:82.25px;height:16.05000000000001px;line-height:16.05000000000001px">CR Project 10</div>
<div class="dc" style="left:151.5px;top:289.4px;width:76.0px;height:16.05000000000001px;line-height:16.05000000000001px">Ethical</div>
<div class="dc" style="left:227.5px;top:289.4px;width:107.5px;height:16.05000000000001px;line-height:16.05000000000001px">HR</div>
<div class="dc" style="left:335px;top:289.4px;width:81.5px;height:16.05000000000001px;line-height:16.05000000000001px">Maria</div>
<div class="dc" style="left:416.5px;top:289.4px;width:100.0px;height:16.05000000000001px;line-height:16.05000000000001px">2024-02-17</div>
<div class="dc" style="left:516.5px;top:289.4px;width:82.0px;height:16.05000000000001px;line-height:16.05000000000001px">2024-05-04</div>
<div class="dc" style="left:598.5px;top:289.4px;width:121.0px;height:16.05000000000001px;line-height:16.05000000000001px">Sydney</div>
<div class="dc" style="left:719.5px;top:289.4px;width:86.0px;height:16.05000000000001px;line-height:16.05000000000001px">On Hold</div>
<div class="dc" style="left:805.5px;top:289.4px;width:85.0px;height:16.05000000000001px;line-height:16.05000000000001px">Low</div>
<div class="dc" style="left:890.5px;top:289.4px;width:99.0px;height:16.05000000000001px;line-height:16.05000000000001px">72</div>
<div class="dc" style="left:989.5px;top:289.4px;width:97.0px;height:16.05000000000001px;line-height:16.05000000000001px">44,357.00</div>
<div class="dc" style="left:1086.5px;top:289.4px;width:174.5px;height:16.05000000000001px;line-height:16.05000000000001px">39,963.81</div>
<div class="dc" style="left:34.5px;top:305.45px;width:34.75px;height:16.05000000000001px;line-height:16.05000000000001px">16</div>
<div class="dc" style="left:69.25px;top:305.45px;width:82.25px;height:16.05000000000001px;line-height:16.05000000000001px">CR Project 16</div>
<div class="dc" style="left:151.5px;top:305.45px;width:76.0px;height:16.05000000000001px;line-height:16.05000000000001px">Ethical</div>
<div class="dc" style="left:227.5px;top:305.45px;width:107.5px;height:16.05000000000001px;line-height:16.05000000000001px">Finance</div>
<div class="dc" style="left:335px;top:305.45px;width:81.5px;height:16.05000000000001px;line-height:16.05000000000001px">Maria</div>
<div class="dc" style="left:416.5px;top:305.45px;width:100.0px;height:16.05000000000001px;line-height:16.05000000000001px">2024-01-02</div>
<div class="dc" style="left:516.5px;top:305.45px;width:82.0px;height:16.05000000000001px;line-height:16.05000000000001px">2024-03-15</div>
<div class="dc" style="left:598.5px;top:305.45px;width:121.0px;height:16.05000000000001px;line-height:16.05000000000001px">Sydney</div>
<div class="dc" style="left:719.5px;top:305.45px;width:86.0px;height:16.05000000000001px;line-height:16.05000000000001px">Completed</div>
<div class="dc" style="left:805.5px;top:305.45px;width:85.0px;height:16.05000000000001px;line-height:16.05000000000001px">Low</div>
<div class="dc" style="left:890.5px;top:305.45px;width:99.0px;height:16.05000000000001px;line-height:16.05000000000001px">62</div>
<div class="dc" style="left:989.5px;top:305.45px;width:97.0px;height:16.05000000000001px;line-height:16.05000000000001px">16,304.00</div>
<div class="dc" style="left:1086.5px;top:305.45px;width:174.5px;height:16.05000000000001px;line-height:16.05000000000001px">12,326.66</div>
<div class="dc" style="left:34.5px;top:321.5px;width:34.75px;height:16.05000000000001px;line-height:16.05000000000001px">17</div>
<div class="dc" style="left:69.25px;top:321.5px;width:82.25px;height:16.05000000000001px;line-height:16.05000000000001px">CR Project 17</div>
<div class="dc" style="left:151.5px;top:321.5px;width:76.0px;height:16.05000000000001px;line-height:16.05000000000001px">Ethical</div>
<div class="dc" style="left:227.5px;top:321.5px;width:107.5px;height:16.05000000000001px;line-height:16.05000000000001px">HR</div>
<div class="dc" style="left:335px;top:321.5px;width:81.5px;height:16.05000000000001px;line-height:16.05000000000001px">Sophie</div>
<div class="dc" style="left:416.5px;top:321.5px;width:100.0px;height:16.05000000000001px;line-height:16.05000000000001px">2024-04-17</div>
<div class="dc" style="left:516.5px;top:321.5px;width:82.0px;height:16.05000000000001px;line-height:16.05000000000001px">2024-08-11</div>
<div class="dc" style="left:598.5px;top:321.5px;width:121.0px;height:16.05000000000001px;line-height:16.05000000000001px">New York</div>
<div class="dc" style="left:719.5px;top:321.5px;width:86.0px;height:16.05000000000001px;line-height:16.05000000000001px">In Progress</div>
<div class="dc" style="left:805.5px;top:321.5px;width:85.0px;height:16.05000000000001px;line-height:16.05000000000001px">Low</div>
<div class="dc" style="left:890.5px;top:321.5px;width:99.0px;height:16.05000000000001px;line-height:16.05000000000001px">11</div>
<div class="dc" style="left:989.5px;top:321.5px;width:97.0px;height:16.05000000000001px;line-height:16.05000000000001px">65,582.00</div>
<div class="dc" style="left:1086.5px;top:321.5px;width:174.5px;height:16.05000000000001px;line-height:16.05000000000001px">62,504.49</div>
<div class="dc" style="left:34.5px;top:337.55px;width:34.75px;height:16.05000000000001px;line-height:16.05000000000001px">21</div>
<div class="dc" style="left:69.25px;top:337.55px;width:82.25px;height:16.05000000000001px;line-height:16.05000000000001px">CR Project 21</div>
<div class="dc" style="left:151.5px;top:337.55px;width:76.0px;height:16.05000000000001px;line-height:16.05000000000001px">Ethical</div>
<div class="dc" style="left:227.5px;top:337.55px;width:107.5px;height:16.05000000000001px;line-height:16.05000000000001px">Marketing</div>
<div class="dc" style="left:335px;top:337.55px;width:81.5px;height:16.05000000000001px;line-height:16.05000000000001px">Alex</div>
<div class="dc" style="left:416.5px;top:337.55px;width:100.0px;height:16.05000000000001px;line-height:16.05000000000001px">2024-05-11</div>
<div class="dc" style="left:516.5px;top:337.55px;width:82.0px;height:16.05000000000001px;line-height:16.05000000000001px">2024-08-06</div>
<div class="dc" style="left:598.5px;top:337.55px;width:121.0px;height:16.05000000000001px;line-height:16.05000000000001px">Mumbai</div>
<div class="dc" style="left:719.5px;top:337.55px;width:86.0px;height:16.05000000000001px;line-height:16.05000000000001px">On Hold</div>
<div class="dc" style="left:805.5px;top:337.55px;width:85.0px;height:16.05000000000001px;line-height:16.05000000000001px">Low</div>
<div class="dc" style="left:890.5px;top:337.55px;width:99.0px;height:16.05000000000001px;line-height:16.05000000000001px">97</div>
<div class="dc" style="left:989.5px;top:337.55px;width:97.0px;height:16.05000000000001px;line-height:16.05000000000001px">14,235.00</div>
<div class="dc" style="left:1086.5px;top:337.55px;width:174.5px;height:16.05000000000001px;line-height:16.05000000000001px">14,118.98</div>
<div class="dc" style="left:34.5px;top:353.6px;width:34.75px;height:16.049999999999955px;line-height:16.049999999999955px">22</div>
<div class="dc" style="left:69.25px;top:353.6px;width:82.25px;height:16.049999999999955px;line-height:16.049999999999955px">CR Project 22</div>
<div class="dc" style="left:151.5px;top:353.6px;width:76.0px;height:16.049999999999955px;line-height:16.049999999999955px">Ethical</div>
<div class="dc" style="left:227.5px;top:353.6px;width:107.5px;height:16.049999999999955px;line-height:16.049999999999955px">Marketing</div>
<div class="dc" style="left:335px;top:353.6px;width:81.5px;height:16.049999999999955px;line-height:16.049999999999955px">James</div>
<div class="dc" style="left:416.5px;top:353.6px;width:100.0px;height:16.049999999999955px;line-height:16.049999999999955px">2024-06-15</div>
<div class="dc" style="left:516.5px;top:353.6px;width:82.0px;height:16.049999999999955px;line-height:16.049999999999955px">2024-08-15</div>
<div class="dc" style="left:598.5px;top:353.6px;width:121.0px;height:16.049999999999955px;line-height:16.049999999999955px">Sydney</div>
<div class="dc" style="left:719.5px;top:353.6px;width:86.0px;height:16.049999999999955px;line-height:16.049999999999955px">Not Started</div>
<div class="dc" style="left:805.5px;top:353.6px;width:85.0px;height:16.049999999999955px;line-height:16.049999999999955px">Medium</div>
<div class="dc" style="left:890.5px;top:353.6px;width:99.0px;height:16.049999999999955px;line-height:16.049999999999955px">92</div>
<div class="dc" style="left:989.5px;top:353.6px;width:97.0px;height:16.049999999999955px;line-height:16.049999999999955px">93,293.00</div>
<div class="dc" style="left:1086.5px;top:353.6px;width:174.5px;height:16.049999999999955px;line-height:16.049999999999955px">66,552.66</div>
<div class="dc" style="left:34.5px;top:369.65px;width:34.75px;height:16.05000000000001px;line-height:16.05000000000001px">33</div>
<div class="dc" style="left:69.25px;top:369.65px;width:82.25px;height:16.05000000000001px;line-height:16.05000000000001px">CR Project 33</div>
<div class="dc" style="left:151.5px;top:369.65px;width:76.0px;height:16.05000000000001px;line-height:16.05000000000001px">Ethical</div>
<div class="dc" style="left:227.5px;top:369.65px;width:107.5px;height:16.05000000000001px;line-height:16.05000000000001px">Marketing</div>
<div class="dc" style="left:335px;top:369.65px;width:81.5px;height:16.05000000000001px;line-height:16.05000000000001px">Maria</div>
<div class="dc" style="left:416.5px;top:369.65px;width:100.0px;height:16.05000000000001px;line-height:16.05000000000001px">2024-04-29</div>
<div class="dc" style="left:516.5px;top:369.65px;width:82.0px;height:16.05000000000001px;line-height:16.05000000000001px">2024-07-29</div>
<div class="dc" style="left:598.5px;top:369.65px;width:121.0px;height:16.05000000000001px;line-height:16.05000000000001px">Toronto</div>
<div class="dc" style="left:719.5px;top:369.65px;width:86.0px;height:16.05000000000001px;line-height:16.05000000000001px">In Progress</div>
<div class="dc" style="left:805.5px;top:369.65px;width:85.0px;height:16.05000000000001px;line-height:16.05000000000001px">High</div>
<div class="dc" style="left:890.5px;top:369.65px;width:99.0px;height:16.05000000000001px;line-height:16.05000000000001px">88</div>
<div class="dc" style="left:989.5px;top:369.65px;width:97.0px;height:16.05000000000001px;line-height:16.05000000000001px">67,977.00</div>
<div class="dc" style="left:1086.5px;top:369.65px;width:174.5px;height:16.05000000000001px;line-height:16.05000000000001px">67,446.09</div>
<div class="dc" style="left:34.5px;top:385.7px;width:34.75px;height:16.05000000000001px;line-height:16.05000000000001px">35</div>
<div class="dc" style="left:69.25px;top:385.7px;width:82.25px;height:16.05000000000001px;line-height:16.05000000000001px">CR Project 35</div>
<div class="dc" style="left:151.5px;top:385.7px;width:76.0px;height:16.05000000000001px;line-height:16.05000000000001px">Ethical</div>
<div class="dc" style="left:227.5px;top:385.7px;width:107.5px;height:16.05000000000001px;line-height:16.05000000000001px">Finance</div>
<div class="dc" style="left:335px;top:385.7px;width:81.5px;height:16.05000000000001px;line-height:16.05000000000001px">James</div>
<div class="dc" style="left:416.5px;top:385.7px;width:100.0px;height:16.05000000000001px;line-height:16.05000000000001px">2024-03-30</div>
<div class="dc" style="left:516.5px;top:385.7px;width:82.0px;height:16.05000000000001px;line-height:16.05000000000001px">2024-06-09</div>
<div class="dc" style="left:598.5px;top:385.7px;width:121.0px;height:16.05000000000001px;line-height:16.05000000000001px">Mumbai</div>
<div class="dc" style="left:719.5px;top:385.7px;width:86.0px;height:16.05000000000001px;line-height:16.05000000000001px">Not Started</div>
<div class="dc" style="left:805.5px;top:385.7px;width:85.0px;height:16.05000000000001px;line-height:16.05000000000001px">Low</div>
<div class="dc" style="left:890.5px;top:385.7px;width:99.0px;height:16.05000000000001px;line-height:16.05000000000001px">79</div>
<div class="dc" style="left:989.5px;top:385.7px;width:97.0px;height:16.05000000000001px;line-height:16.05000000000001px">52,301.00</div>
<div class="dc" style="left:1086.5px;top:385.7px;width:174.5px;height:16.05000000000001px;line-height:16.05000000000001px">33,853.82</div>
<div class="dc" style="left:34.5px;top:401.75px;width:34.75px;height:16.05000000000001px;line-height:16.05000000000001px">39</div>
<div class="dc" style="left:69.25px;top:401.75px;width:82.25px;height:16.05000000000001px;line-height:16.05000000000001px">CR Project 39</div>
<div class="dc" style="left:151.5px;top:401.75px;width:76.0px;height:16.05000000000001px;line-height:16.05000000000001px">Ethical</div>
<div class="dc" style="left:227.5px;top:401.75px;width:107.5px;height:16.05000000000001px;line-height:16.05000000000001px">Operations</div>
<div class="dc" style="left:335px;top:401.75px;width:81.5px;height:16.05000000000001px;line-height:16.05000000000001px">Alex</div>
<div class="dc" style="left:416.5px;top:401.75px;width:100.0px;height:16.05000000000001px;line-height:16.05000000000001px">2024-07-14</div>
<div class="dc" style="left:516.5px;top:401.75px;width:82.0px;height:16.05000000000001px;line-height:16.05000000000001px">2024-10-31</div>
<div class="dc" style="left:598.5px;top:401.75px;width:121.0px;height:16.05000000000001px;line-height:16.05000000000001px">Sydney</div>
<div class="dc" style="left:719.5px;top:401.75px;width:86.0px;height:16.05000000000001px;line-height:16.05000000000001px">Not Started</div>
<div class="dc" style="left:805.5px;top:401.75px;width:85.0px;height:16.05000000000001px;line-height:16.05000000000001px">High</div>
<div class="dc" style="left:890.5px;top:401.75px;width:99.0px;height:16.05000000000001px;line-height:16.05000000000001px">50</div>
<div class="dc" style="left:989.5px;top:401.75px;width:97.0px;height:16.05000000000001px;line-height:16.05000000000001px">66,853.00</div>
<div class="dc" style="left:1086.5px;top:401.75px;width:174.5px;height:16.05000000000001px;line-height:16.05000000000001px">45,347.94</div>
<div class="dc" style="left:34.5px;top:417.8px;width:34.75px;height:16.05000000000001px;line-height:16.05000000000001px">40</div>
<div class="dc" style="left:69.25px;top:417.8px;width:82.25px;height:16.05000000000001px;line-height:16.05000000000001px">CR Project 40</div>
<div class="dc" style="left:151.5px;top:417.8px;width:76.0px;height:16.05000000000001px;line-height:16.05000000000001px">Ethical</div>
<div class="dc" style="left:227.5px;top:417.8px;width:107.5px;height:16.05000000000001px;line-height:16.05000000000001px">Operations</div>
<div class="dc" style="left:335px;top:417.8px;width:81.5px;height:16.05000000000001px;line-height:16.05000000000001px">Sophie</div>
<div class="dc" style="left:416.5px;top:417.8px;width:100.0px;height:16.05000000000001px;line-height:16.05000000000001px">2024-02-29</div>
<div class="dc" style="left:516.5px;top:417.8px;width:82.0px;height:16.05000000000001px;line-height:16.05000000000001px">2024-05-20</div>
<div class="dc" style="left:598.5px;top:417.8px;width:121.0px;height:16.05000000000001px;line-height:16.05000000000001px">London</div>
<div class="dc" style="left:719.5px;top:417.8px;width:86.0px;height:16.05000000000001px;line-height:16.05000000000001px">In Progress</div>
<div class="dc" style="left:805.5px;top:417.8px;width:85.0px;height:16.05000000000001px;line-height:16.05000000000001px">Low</div>
<div class="dc" style="left:890.5px;top:417.8px;width:99.0px;height:16.05000000000001px;line-height:16.05000000000001px">99</div>
<div class="dc" style="left:989.5px;top:417.8px;width:97.0px;height:16.05000000000001px;line-height:16.05000000000001px">53,786.00</div>
<div class="dc" style="left:1086.5px;top:417.8px;width:174.5px;height:16.05000000000001px;line-height:16.05000000000001px">34,372.05</div>
<div class="dc" style="left:34.5px;top:433.85px;width:34.75px;height:16.049999999999955px;line-height:16.049999999999955px">52</div>
<div class="dc" style="left:69.25px;top:433.85px;width:82.25px;height:16.049999999999955px;line-height:16.049999999999955px">CR Project 52</div>
<div class="dc" style="left:151.5px;top:433.85px;width:76.0px;height:16.049999999999955px;line-height:16.049999999999955px">Ethical</div>
<div class="dc" style="left:227.5px;top:433.85px;width:107.5px;height:16.049999999999955px;line-height:16.049999999999955px">Operations</div>
<div class="dc" style="left:335px;top:433.85px;width:81.5px;height:16.049999999999955px;line-height:16.049999999999955px">Priya</div>
<div class="dc" style="left:416.5px;top:433.85px;width:100.0px;height:16.049999999999955px;line-height:16.049999999999955px">2024-02-13</div>
<div class="dc" style="left:516.5px;top:433.85px;width:82.0px;height:16.049999999999955px;line-height:16.049999999999955px">2024-06-08</div>
<div class="dc" style="left:598.5px;top:433.85px;width:121.0px;height:16.049999999999955px;line-height:16.049999999999955px">London</div>
<div class="dc" style="left:719.5px;top:433.85px;width:86.0px;height:16.049999999999955px;line-height:16.049999999999955px">Completed</div>
<div class="dc" style="left:805.5px;top:433.85px;width:85.0px;height:16.049999999999955px;line-height:16.049999999999955px">Low</div>
<div class="dc" style="left:890.5px;top:433.85px;width:99.0px;height:16.049999999999955px;line-height:16.049999999999955px">68</div>
<div class="dc" style="left:989.5px;top:433.85px;width:97.0px;height:16.049999999999955px;line-height:16.049999999999955px">47,980.00</div>
<div class="dc" style="left:1086.5px;top:433.85px;width:174.5px;height:16.049999999999955px;line-height:16.049999999999955px">46,788.89</div>
<div class="dc" style="left:34.5px;top:449.9px;width:34.75px;height:16.05000000000001px;line-height:16.05000000000001px">63</div>
<div class="dc" style="left:69.25px;top:449.9px;width:82.25px;height:16.05000000000001px;line-height:16.05000000000001px">CR Project 63</div>
<div class="dc" style="left:151.5px;top:449.9px;width:76.0px;height:16.05000000000001px;line-height:16.05000000000001px">Ethical</div>
<div class="dc" style="left:227.5px;top:449.9px;width:107.5px;height:16.05000000000001px;line-height:16.05000000000001px">Sustainability</div>
<div class="dc" style="left:335px;top:449.9px;width:81.5px;height:16.05000000000001px;line-height:16.05000000000001px">James</div>
<div class="dc" style="left:416.5px;top:449.9px;width:100.0px;height:16.05000000000001px;line-height:16.05000000000001px">2024-03-15</div>
<div class="dc" style="left:516.5px;top:449.9px;width:82.0px;height:16.05000000000001px;line-height:16.05000000000001px">2024-04-21</div>
<div class="dc" style="left:598.5px;top:449.9px;width:121.0px;height:16.05000000000001px;line-height:16.05000000000001px">Mumbai</div>
<div class="dc" style="left:719.5px;top:449.9px;width:86.0px;height:16.05000000000001px;line-height:16.05000000000001px">In Progress</div>
<div class="dc" style="left:805.5px;top:449.9px;width:85.0px;height:16.05000000000001px;line-height:16.05000000000001px">Low</div>
<div class="dc" style="left:890.5px;top:449.9px;width:99.0px;height:16.05000000000001px;line-height:16.05000000000001px">47</div>
<div class="dc" style="left:989.5px;top:449.9px;width:97.0px;height:16.05000000000001px;line-height:16.05000000000001px">99,813.00</div>
<div class="dc" style="left:1086.5px;top:449.9px;width:174.5px;height:16.05000000000001px;line-height:16.05000000000001px">67,045.53</div>
<div class="dc" style="left:34.5px;top:465.95px;width:34.75px;height:16.05000000000001px;line-height:16.05000000000001px">71</div>
<div class="dc" style="left:69.25px;top:465.95px;width:82.25px;height:16.05000000000001px;line-height:16.05000000000001px">CR Project 71</div>
<div class="dc" style="left:151.5px;top:465.95px;width:76.0px;height:16.05000000000001px;line-height:16.05000000000001px">Ethical</div>
<div class="dc" style="left:227.5px;top:465.95px;width:107.5px;height:16.05000000000001px;line-height:16.05000000000001px">Sustainability</div>
<div class="dc" style="left:335px;top:465.95px;width:81.5px;height:16.05000000000001px;line-height:16.05000000000001px">Sophie</div>
<div class="dc" style="left:416.5px;top:465.95px;width:100.0px;height:16.05000000000001px;line-height:16.05000000000001px">2024-02-05</div>
<div class="dc" style="left:516.5px;top:465.95px;width:82.0px;height:16.05000000000001px;line-height:16.05000000000001px">2024-04-07</div>
<div class="dc" style="left:598.5px;top:465.95px;width:121.0px;height:16.05000000000001px;line-height:16.05000000000001px">London</div>
<div class="dc" style="left:719.5px;top:465.95px;width:86.0px;height:16.05000000000001px;line-height:16.05000000000001px">Completed</div>
<div class="dc" style="left:805.5px;top:465.95px;width:85.0px;height:16.05000000000001px;line-height:16.05000000000001px">Low</div>
<div class="dc" style="left:890.5px;top:465.95px;width:99.0px;height:16.05000000000001px;line-height:16.05000000000001px">63</div>
<div class="dc" style="left:989.5px;top:465.95px;width:97.0px;height:16.05000000000001px;line-height:16.05000000000001px">44,640.00</div>
<div class="dc" style="left:1086.5px;top:465.95px;width:174.5px;height:16.05000000000001px;line-height:16.05000000000001px">44,406.43</div>
<div class="dc" style="left:34.5px;top:482.0px;width:34.75px;height:16.05000000000001px;line-height:16.05000000000001px">73</div>
<div class="dc" style="left:69.25px;top:482.0px;width:82.25px;height:16.05000000000001px;line-height:16.05000000000001px">CR Project 73</div>
<div class="dc" style="left:151.5px;top:482.0px;width:76.0px;height:16.05000000000001px;line-height:16.05000000000001px">Ethical</div>
<div class="dc" style="left:227.5px;top:482.0px;width:107.5px;height:16.05000000000001px;line-height:16.05000000000001px">Operations</div>
<div class="dc" style="left:335px;top:482.0px;width:81.5px;height:16.05000000000001px;line-height:16.05000000000001px">Priya</div>
<div class="dc" style="left:416.5px;top:482.0px;width:100.0px;height:16.05000000000001px;line-height:16.05000000000001px">2024-01-09</div>
<div class="dc" style="left:516.5px;top:482.0px;width:82.0px;height:16.05000000000001px;line-height:16.05000000000001px">2024-03-03</div>
<div class="dc" style="left:598.5px;top:482.0px;width:121.0px;height:16.05000000000001px;line-height:16.05000000000001px">Toronto</div>
<div class="dc" style="left:719.5px;top:482.0px;width:86.0px;height:16.05000000000001px;line-height:16.05000000000001px">In Progress</div>
<div class="dc" style="left:805.5px;top:482.0px;width:85.0px;height:16.05000000000001px;line-height:16.05000000000001px">Medium</div>
<div class="dc" style="left:890.5px;top:482.0px;width:99.0px;height:16.05000000000001px;line-height:16.05000000000001px">53</div>
<div class="dc" style="left:989.5px;top:482.0px;width:97.0px;height:16.05000000000001px;line-height:16.05000000000001px">85,725.00</div>
<div class="dc" style="left:1086.5px;top:482.0px;width:174.5px;height:16.05000000000001px;line-height:16.05000000000001px">68,075.30</div>
<div class="dc" style="left:34.5px;top:498.05px;width:34.75px;height:16.05000000000001px;line-height:16.05000000000001px">76</div>
<div class="dc" style="left:69.25px;top:498.05px;width:82.25px;height:16.05000000000001px;line-height:16.05000000000001px">CR Project 76</div>
<div class="dc" style="left:151.5px;top:498.05px;width:76.0px;height:16.05000000000001px;line-height:16.05000000000001px">Ethical</div>
<div class="dc" style="left:227.5px;top:498.05px;width:107.5px;height:16.05000000000001px;line-height:16.05000000000001px">HR</div>
<div class="dc" style="left:335px;top:498.05px;width:81.5px;height:16.05000000000001px;line-height:16.05000000000001px">Priya</div>
<div class="dc" style="left:416.5px;top:498.05px;width:100.0px;height:16.05000000000001px;line-height:16.05000000000001px">2024-03-26</div>
<div class="dc" style="left:516.5px;top:498.05px;width:82.0px;height:16.05000000000001px;line-height:16.05000000000001px">2024-06-30</div>
<div class="dc" style="left:598.5px;top:498.05px;width:121.0px;height:16.05000000000001px;line-height:16.05000000000001px">Toronto</div>
<div class="dc" style="left:719.5px;top:498.05px;width:86.0px;height:16.05000000000001px;line-height:16.05000000000001px">Completed</div>
<div class="dc" style="left:805.5px;top:498.05px;width:85.0px;height:16.05000000000001px;line-height:16.05000000000001px">Medium</div>
<div class="dc" style="left:890.5px;top:498.05px;width:99.0px;height:16.05000000000001px;line-height:16.05000000000001px">35</div>
<div class="dc" style="left:989.5px;top:498.05px;width:97.0px;height:16.05000000000001px;line-height:16.05000000000001px">14,881.00</div>
<div class="dc" style="left:1086.5px;top:498.05px;width:174.5px;height:16.05000000000001px;line-height:16.05000000000001px">12,876.04</div>
<div class="dc" style="left:34.5px;top:514.1px;width:34.75px;height:16.049999999999955px;line-height:16.049999999999955px">78</div>
<div class="dc" style="left:69.25px;top:514.1px;width:82.25px;height:16.049999999999955px;line-height:16.049999999999955px">CR Project 78</div>
<div class="dc" style="left:151.5px;top:514.1px;width:76.0px;height:16.049999999999955px;line-height:16.049999999999955px">Ethical</div>
<div class="dc" style="left:227.5px;top:514.1px;width:107.5px;height:16.049999999999955px;line-height:16.049999999999955px">Operations</div>
<div class="dc" style="left:335px;top:514.1px;width:81.5px;height:16.049999999999955px;line-height:16.049999999999955px">James</div>
<div class="dc" style="left:416.5px;top:514.1px;width:100.0px;height:16.049999999999955px;line-height:16.049999999999955px">2024-02-12</div>
<div class="dc" style="left:516.5px;top:514.1px;width:82.0px;height:16.049999999999955px;line-height:16.049999999999955px">2024-06-08</div>
<div class="dc" style="left:598.5px;top:514.1px;width:121.0px;height:16.049999999999955px;line-height:16.049999999999955px">New York</div>
<div class="dc" style="left:719.5px;top:514.1px;width:86.0px;height:16.049999999999955px;line-height:16.049999999999955px">Completed</div>
<div class="dc" style="left:805.5px;top:514.1px;width:85.0px;height:16.049999999999955px;line-height:16.049999999999955px">Low</div>
<div class="dc" style="left:890.5px;top:514.1px;width:99.0px;height:16.049999999999955px;line-height:16.049999999999955px">12</div>
<div class="dc" style="left:989.5px;top:514.1px;width:97.0px;height:16.049999999999955px;line-height:16.049999999999955px">22,477.00</div>
<div class="dc" style="left:1086.5px;top:514.1px;width:174.5px;height:16.049999999999955px;line-height:16.049999999999955px">17,709.55</div>
<div class="dc" style="left:34.5px;top:530.15px;width:34.75px;height:16.050000000000068px;line-height:16.050000000000068px">80</div>
<div class="dc" style="left:69.25px;top:530.15px;width:82.25px;height:16.050000000000068px;line-height:16.050000000000068px">CR Project 80</div>
<div class="dc" style="left:151.5px;top:530.15px;width:76.0px;height:16.050000000000068px;line-height:16.050000000000068px">Ethical</div>
<div class="dc" style="left:227.5px;top:530.15px;width:107.5px;height:16.050000000000068px;line-height:16.050000000000068px">Finance</div>
<div class="dc" style="left:335px;top:530.15px;width:81.5px;height:16.050000000000068px;line-height:16.050000000000068px">Maria</div>
<div class="dc" style="left:416.5px;top:530.15px;width:100.0px;height:16.050000000000068px;line-height:16.050000000000068px">2024-03-24</div>
<div class="dc" style="left:516.5px;top:530.15px;width:82.0px;height:16.050000000000068px;line-height:16.050000000000068px">2024-05-23</div>
<div class="dc" style="left:598.5px;top:530.15px;width:121.0px;height:16.050000000000068px;line-height:16.050000000000068px">New York</div>
<div class="dc" style="left:719.5px;top:530.15px;width:86.0px;height:16.050000000000068px;line-height:16.050000000000068px">Completed</div>
<div class="dc" style="left:805.5px;top:530.15px;width:85.0px;height:16.050000000000068px;line-height:16.050000000000068px">High</div>
<div class="dc" style="left:890.5px;top:530.15px;width:99.0px;height:16.050000000000068px;line-height:16.050000000000068px">40</div>
<div class="dc" style="left:989.5px;top:530.15px;width:97.0px;height:16.050000000000068px;line-height:16.050000000000068px">43,210.00</div>
<div class="dc" style="left:1086.5px;top:530.15px;width:174.5px;height:16.050000000000068px;line-height:16.050000000000068px">28,920.44</div>
<div class="dc" style="left:34.5px;top:546.2px;width:34.75px;height:16.049999999999955px;line-height:16.049999999999955px">91</div>
<div class="dc" style="left:69.25px;top:546.2px;width:82.25px;height:16.049999999999955px;line-height:16.049999999999955px">CR Project 91</div>
<div class="dc" style="left:151.5px;top:546.2px;width:76.0px;height:16.049999999999955px;line-height:16.049999999999955px">Ethical</div>
<div class="dc" style="left:227.5px;top:546.2px;width:107.5px;height:16.049999999999955px;line-height:16.049999999999955px">Finance</div>
<div class="dc" style="left:335px;top:546.2px;width:81.5px;height:16.049999999999955px;line-height:16.049999999999955px">Sophie</div>
<div class="dc" style="left:416.5px;top:546.2px;width:100.0px;height:16.049999999999955px;line-height:16.049999999999955px">2024-07-18</div>
<div class="dc" style="left:516.5px;top:546.2px;width:82.0px;height:16.049999999999955px;line-height:16.049999999999955px">2024-09-30</div>
<div class="dc" style="left:598.5px;top:546.2px;width:121.0px;height:16.049999999999955px;line-height:16.049999999999955px">New York</div>
<div class="dc" style="left:719.5px;top:546.2px;width:86.0px;height:16.049999999999955px;line-height:16.049999999999955px">Not Started</div>
<div class="dc" style="left:805.5px;top:546.2px;width:85.0px;height:16.049999999999955px;line-height:16.049999999999955px">Medium</div>
<div class="dc" style="left:890.5px;top:546.2px;width:99.0px;height:16.049999999999955px;line-height:16.049999999999955px">68</div>
<div class="dc" style="left:989.5px;top:546.2px;width:97.0px;height:16.049999999999955px;line-height:16.049999999999955px">66,890.00</div>
<div class="dc" style="left:1086.5px;top:546.2px;width:174.5px;height:16.049999999999955px;line-height:16.049999999999955px">40,504.99</div>
</div>
</body></html>
